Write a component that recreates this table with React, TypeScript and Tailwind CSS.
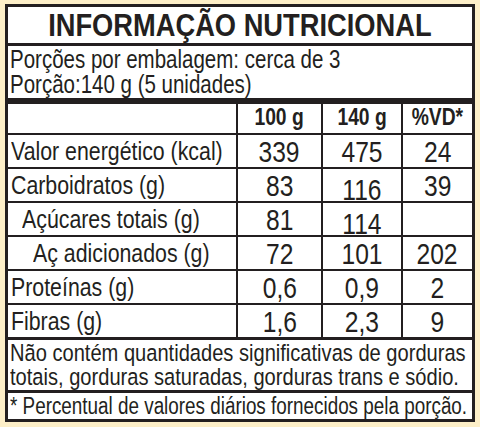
import React from "react";

const SANS = "'Liberation Sans', Arial, sans-serif";

function N({ children, left }: { children: React.ReactNode; left?: boolean }) {
  return (
    <span
      className={`inline-block whitespace-nowrap [transform:scaleX(0.82)] ${left ? "origin-left" : "origin-center"}`}
    >
      {children}
    </span>
  );
}

type Row = { label: string; indent: string; a: string; b: string; c: string; bLow?: boolean; last?: boolean };

const rows: Row[] = [
  { label: "Valor energético (kcal)", indent: "pl-[3px]", a: "339", b: "475", c: "24" },
  { label: "Carboidratos (g)", indent: "pl-[3px]", a: "83", b: "116", c: "39", bLow: true },
  { label: "Açúcares totais (g)", indent: "pl-[14px]", a: "81", b: "114", c: "", bLow: true },
  { label: "Aç adicionados (g)", indent: "pl-[25px]", a: "72", b: "101", c: "202" },
  { label: "Proteínas (g)", indent: "pl-[3px]", a: "0,6", b: "0,9", c: "2" },
  { label: "Fibras (g)", indent: "pl-[3px]", a: "1,6", b: "2,3", c: "9", last: true },
];

export default function App() {
  return (
    <div
      className="w-[480px] h-[427px] bg-[#fdefc8] pt-[4px] pl-[5px] text-[#231f20] overflow-hidden"
      style={{ fontFamily: SANS }}
    >
      <div className="w-[470px] h-[418px] border-[3px] border-[#231f20] bg-white flex flex-col overflow-hidden">
        <div className="h-[39px] border-b-[3px] border-[#231f20] flex items-center justify-center font-bold text-[31px] leading-none">
          <span className="inline-block whitespace-nowrap [transform:scaleX(0.88)] origin-center">
            INFORMAÇÃO NUTRICIONAL
          </span>
        </div>
        <div className="h-[58px] border-b-[6px] border-[#231f20] pl-[2px] pt-[1px] text-[25px] leading-[25px]">
          <div>
            <N left>Porções por embalagem: cerca de 3</N>
          </div>
          <div>
            <N left>Porção:140 g (5 unidades)</N>
          </div>
        </div>
        <div className="h-[31px] border-b-2 border-[#231f20] flex font-bold text-[23.5px] leading-none">
          <div className="w-[230px] border-r-2 border-[#231f20]" />
          <div className="w-[85px] border-r-2 border-[#231f20] flex items-center justify-center pb-[2px]">
            <N>100 g</N>
          </div>
          <div className="w-[80px] border-r-2 border-[#231f20] flex items-center justify-center pb-[2px]">
            <N>140 g</N>
          </div>
          <div className="flex-1 flex items-center justify-center pb-[2px]">
            <N>%VD*</N>
          </div>
        </div>
        {rows.map((r) => (
          <div
            key={r.label}
            className={`flex ${r.last ? "h-[35px] border-b-[3px]" : "h-[34px] border-b-2"} border-[#231f20]`}
          >
            <div className={`w-[230px] border-r-2 border-[#231f20] flex items-center ${r.indent} text-[26px] leading-none`}>
              <N left>{r.label}</N>
            </div>
            <div className="w-[85px] border-r-2 border-[#231f20] flex items-center justify-center text-[30px] leading-none pt-[2px]">
              <N>{r.a}</N>
            </div>
            <div
              className={`w-[80px] border-r-2 border-[#231f20] flex items-center justify-center text-[30px] leading-none ${
                r.bLow ? "pt-[9px]" : "pt-[2px]"
              }`}
            >
              <N>{r.b}</N>
            </div>
            <div className="flex-1 flex items-center justify-center text-[30px] leading-none pt-[2px]">
              <N>{r.c}</N>
            </div>
          </div>
        ))}
        <div className="h-[53px] border-b-[3px] border-[#231f20] pl-[2px] pt-[1px] text-[24.5px] leading-[24px]">
          <div>
            <N left>Não contém quantidades significativas de gorduras</N>
          </div>
          <div>
            <N left>totais, gorduras saturadas, gorduras trans e sódio.</N>
          </div>
        </div>
        <div className="flex-1 pl-[2px] flex items-center text-[23px] leading-none">
          <N left>* Percentual de valores diários fornecidos pela porção.</N>
        </div>
      </div>
    </div>
  );
}
